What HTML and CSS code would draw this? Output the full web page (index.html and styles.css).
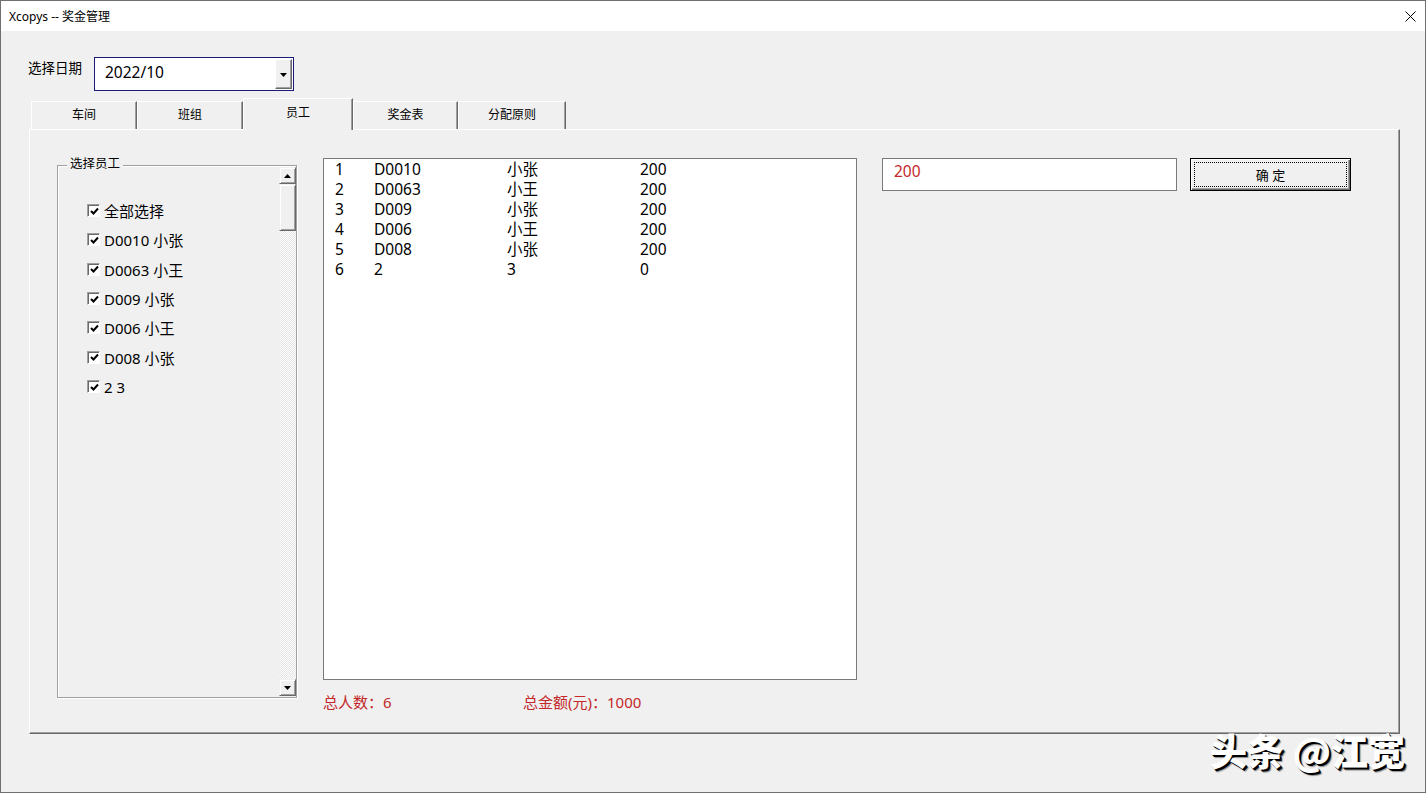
FILE: index.html
```html
<!DOCTYPE html>
<html>
<head>
<meta charset="utf-8">
<link rel="stylesheet" href="styles.css">
</head>
<body>
<div class="window">
  <div class="titlebar">
    <span class="title">Xcopys -- 奖金管理</span>
    <svg class="close" width="11" height="11" viewBox="0 0 11 11"><path d="M0.5 0.5 L10.5 10.5 M10.5 0.5 L0.5 10.5" stroke="#000" stroke-width="1" fill="none"/></svg>
  </div>

  <div class="daterow">
    <span class="date-label">选择日期</span>
    <div class="combo">
      <span class="combo-text">2022/10</span>
      <div class="dropbtn"><svg width="7" height="4" viewBox="0 0 7 4"><path d="M0 0 H7 L3.5 4 Z" fill="#000"/></svg></div>
    </div>
  </div>

  <div class="tabs">
    <div class="tab w1">车间</div>
    <div class="tab w2">班组</div>
    <div class="tab sel">员工</div>
    <div class="tab w4">奖金表</div>
    <div class="tab w5">分配原则</div>
  </div>

  <div class="panel">
    <div class="frame">
      <span class="legend">选择员工</span>
      <div class="checklist">
        <div class="crow"><span class="cbox"><svg width="9" height="9" viewBox="0 0 9 9"><path d="M1 4 L3.5 6.5 L8 1.5" stroke="#000" stroke-width="2" fill="none"/></svg></span><span>全部选择</span></div>
        <div class="crow"><span class="cbox"><svg width="9" height="9" viewBox="0 0 9 9"><path d="M1 4 L3.5 6.5 L8 1.5" stroke="#000" stroke-width="2" fill="none"/></svg></span><span>D0010 小张</span></div>
        <div class="crow"><span class="cbox"><svg width="9" height="9" viewBox="0 0 9 9"><path d="M1 4 L3.5 6.5 L8 1.5" stroke="#000" stroke-width="2" fill="none"/></svg></span><span>D0063 小王</span></div>
        <div class="crow"><span class="cbox"><svg width="9" height="9" viewBox="0 0 9 9"><path d="M1 4 L3.5 6.5 L8 1.5" stroke="#000" stroke-width="2" fill="none"/></svg></span><span>D009 小张</span></div>
        <div class="crow"><span class="cbox"><svg width="9" height="9" viewBox="0 0 9 9"><path d="M1 4 L3.5 6.5 L8 1.5" stroke="#000" stroke-width="2" fill="none"/></svg></span><span>D006 小王</span></div>
        <div class="crow"><span class="cbox"><svg width="9" height="9" viewBox="0 0 9 9"><path d="M1 4 L3.5 6.5 L8 1.5" stroke="#000" stroke-width="2" fill="none"/></svg></span><span>D008 小张</span></div>
        <div class="crow"><span class="cbox"><svg width="9" height="9" viewBox="0 0 9 9"><path d="M1 4 L3.5 6.5 L8 1.5" stroke="#000" stroke-width="2" fill="none"/></svg></span><span>2 3</span></div>
      </div>
      <div class="vscroll">
        <div class="sbtn"><svg width="7" height="4" viewBox="0 0 7 4"><path d="M0 4 H7 L3.5 0 Z" fill="#000"/></svg></div>
        <div class="thumb"></div>
        <div class="track"></div>
        <div class="sbtn"><svg width="7" height="4" viewBox="0 0 7 4"><path d="M0 0 H7 L3.5 4 Z" fill="#000"/></svg></div>
      </div>
    </div>

    <div class="listcol">
      <div class="listbox">
        <div class="lrow"><span>1</span><span>D0010</span><span>小张</span><span>200</span></div>
        <div class="lrow"><span>2</span><span>D0063</span><span>小王</span><span>200</span></div>
        <div class="lrow"><span>3</span><span>D009</span><span>小张</span><span>200</span></div>
        <div class="lrow"><span>4</span><span>D006</span><span>小王</span><span>200</span></div>
        <div class="lrow"><span>5</span><span>D008</span><span>小张</span><span>200</span></div>
        <div class="lrow"><span>6</span><span>2</span><span>3</span><span>0</span></div>
      </div>
      <div class="stats">
        <span class="stat1">总人数：6</span>
        <span>总金额(元)：1000</span>
      </div>
    </div>

    <div class="textbox">200</div>
    <div class="okbtn"><span class="focus">确 定</span></div>
  </div>

  <div class="watermark">头条 @江宽</div>
</div>
</body>
</html>
```

FILE: styles.css
```css
* { box-sizing: border-box; }
body {
  margin: 0;
  font-family: "Noto Sans", "Noto Sans CJK SC", sans-serif;
  color: #000;
}
.window {
  width: 1426px;
  height: 793px;
  border: 1px solid #707070;
  background: #f0f0f0;
  position: relative;
  overflow: hidden;
}
.titlebar {
  height: 30px;
  background: #fff;
  display: flex;
  align-items: center;
  justify-content: space-between;
  padding: 0 9px 0 8px;
  font-size: 12px;
}
.close { display: block; }

.daterow {
  display: flex;
  align-items: flex-start;
  margin: 26px 0 0 27px;
}
.date-label {
  width: 66px;
  font-size: 13.5px;
  line-height: 20px;
  margin-top: 1px;
}
.combo {
  width: 200px;
  height: 34px;
  border: 1px solid #1a1a7c;
  background: #fff;
  display: flex;
  align-items: center;
  justify-content: space-between;
  padding-left: 10px;
  font-size: 15.5px;
}
.combo-text { margin-top: -4px; }
.dropbtn {
  width: 17px;
  height: 30px;
  margin-right: 1px;
  background: #f0f0f0;
  border: 1px solid;
  border-color: #fff #696969 #696969 #fff;
  box-shadow: inset -1px -1px #a0a0a0;
  display: flex;
  align-items: center;
  justify-content: center;
  padding-top: 2px;
}
.dropbtn svg { display: block; }

.tabs {
  display: flex;
  align-items: flex-start;
  height: 32px;
  margin: 7px 0 -1px 30px;
  position: relative;
  z-index: 1;
}
.tab {
  height: 28px;
  margin-top: 3px;
  background: #f0f0f0;
  border-top: 1px solid #fff;
  border-left: 1px solid #fff;
  border-right: 1px solid #696969;
  box-shadow: inset -1px 0 #a0a0a0;
  font-size: 12px;
  display: flex;
  align-items: center;
  justify-content: center;
  padding-bottom: 3px;
}
.tab.w1 { width: 106px; }
.tab.w2 { width: 106px; }
.tab.w4 { width: 105px; }
.tab.w5 { width: 108px; }
.tab.sel {
  width: 110px;
  height: 32px;
  margin-top: 0;
  padding-bottom: 6px;
}

.panel {
  margin-left: 28px;
  width: 1371px;
  height: 605px;
  border-top: 1px solid #fff;
  border-left: 1px solid #fff;
  border-right: 1px solid #696969;
  border-bottom: 1px solid #696969;
  box-shadow: inset -1px -1px #a0a0a0;
  display: flex;
  align-items: flex-start;
  padding: 28px 0 0 27px;
}

.frame {
  position: relative;
  margin-top: 7px;
  width: 240px;
  height: 533px;
  border: 1px solid #a0a0a0;
  box-shadow: 1px 1px 0 #fff, inset 1px 1px 0 #fff;
  display: flex;
}
.legend {
  position: absolute;
  top: -10px;
  left: 9px;
  padding: 0 3px;
  background: #f0f0f0;
  font-size: 12.5px;
  line-height: 16px;
}
.checklist {
  flex: 1;
  padding: 30px 0 0 29px;
}
.crow {
  height: 29.33px;
  display: flex;
  align-items: center;
  gap: 4px;
  font-size: 15px;
}
.cbox {
  width: 13px;
  height: 13px;
  background: #fff;
  border: 1px solid;
  border-color: #a0a0a0 #fff #fff #a0a0a0;
  box-shadow: inset 1px 1px #696969;
  display: flex;
  align-items: center;
  justify-content: center;
  padding: 1px 0 0 1px;
}
.cbox svg { display: block; }
.vscroll {
  width: 17px;
  margin: 1px 0;
  display: flex;
  flex-direction: column;
}
.sbtn, .thumb {
  background: #f0f0f0;
  border: 1px solid;
  border-color: #f0f0f0 #696969 #696969 #f0f0f0;
  box-shadow: inset 1px 1px #fff, inset -1px -1px #a0a0a0;
}
.sbtn {
  height: 17px;
  display: flex;
  align-items: center;
  justify-content: center;
}
.sbtn svg { display: block; }
.thumb { height: 47px; }
.track {
  flex: 1;
  background-color: #fafafa;
  background-image: repeating-conic-gradient(#e6e6e6 0 25%, #fdfdfd 0 50%);
  background-size: 2px 2px;
}

.listcol {
  margin-left: 26px;
  display: flex;
  flex-direction: column;
}
.listbox {
  width: 534px;
  height: 522px;
  background: #fff;
  border: 1px solid #7a7a7a;
  padding: 0 0 0 11px;
}
.lrow {
  display: grid;
  grid-template-columns: 39px 133px 133px 1fr;
  height: 20px;
  line-height: 20px;
  font-size: 15.5px;
}
.stats {
  display: flex;
  margin-top: 12px;
  font-size: 15px;
  line-height: 20px;
  color: #c4282b;
}
.stat1 { width: 200px; }

.textbox {
  margin-left: 25px;
  width: 295px;
  height: 33px;
  background: #fff;
  border: 1px solid #7a7a7a;
  padding: 2px 0 0 11px;
  font-size: 15.5px;
  line-height: 20px;
  color: #c4282b;
}
.okbtn {
  margin-left: 13px;
  width: 161px;
  height: 33px;
  background: #f0f0f0;
  border: 1px solid #000;
  box-shadow: inset 1px 1px #fff, inset -1px -1px #696969, inset -2px -2px #a0a0a0;
  padding: 3px;
  display: flex;
}
.focus {
  flex: 1;
  border: 1px dotted #000;
  display: flex;
  align-items: center;
  justify-content: center;
  font-size: 13px;
  padding-top: 0;
}

.watermark {
  position: absolute;
  right: 20px;
  bottom: 20px;
  font-family: "Noto Sans CJK SC", sans-serif;
  font-size: 37px;
  font-weight: 900;
  line-height: 44px;
  color: #fff;
  text-shadow: 1px 1px 0 #000, 2px 2px 0 #000, 3px 3px 1px rgba(0,0,0,0.4);
}
```
